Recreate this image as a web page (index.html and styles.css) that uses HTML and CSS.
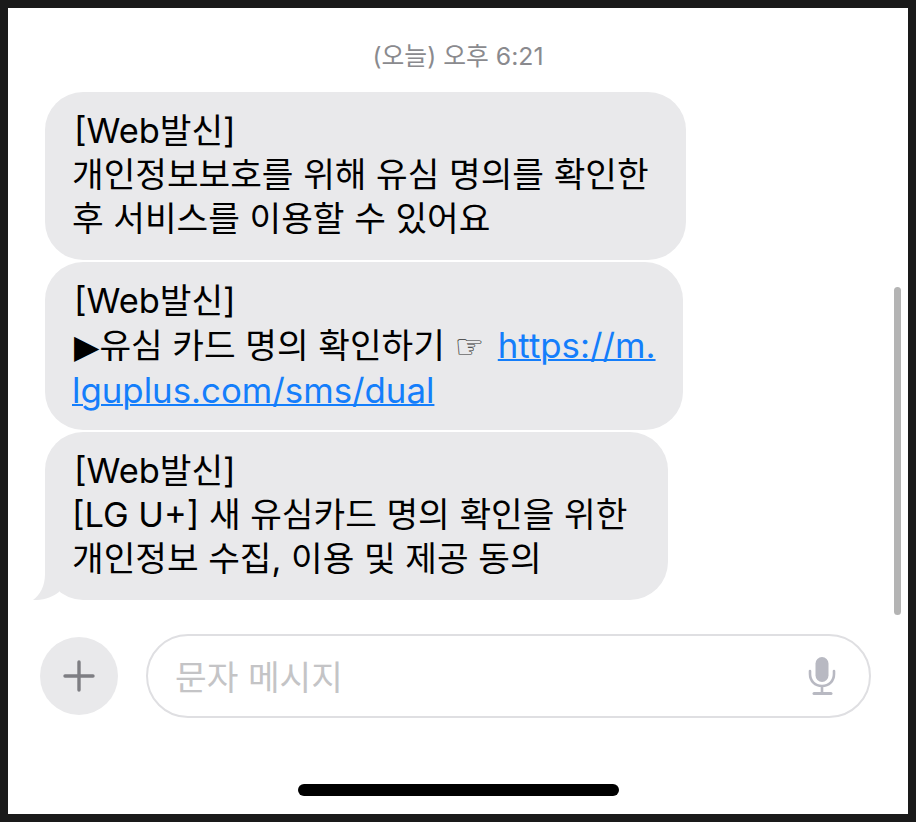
FILE: index.html
```html
<!DOCTYPE html>
<html lang="ko">
<head>
    <meta charset="UTF-8">
    <meta name="viewport" content="width=device-width, initial-scale=1.0">
    <title>문자 메시지</title>
    <link rel="stylesheet" href="styles.css">
</head>
<body>
    <div class="screen">
        <div class="timestamp">(오늘) 오후 6:21</div>

        <!-- Сообщения -->
        <div class="messages">
            <div class="bubble bubble-first">
                <span class="sender">[Web발신]</span><br>
                개인정보보호를 위해 유심 명의를 확인한<br>
                후 서비스를 이용할 수 있어요
            </div>
            <div class="bubble bubble-second">
                <span class="sender">[Web발신]</span><br>
                <span class="glyph arrow">▶</span>유심 카드 명의 확인하기 <span class="glyph hand">☞</span> <a href="#">https://m.<br>lguplus.com/sms/dual</a>
            </div>
            <div class="bubble bubble-third">
                <span class="sender">[Web발신]</span><br>
                [LG U+] 새 유심카드 명의 확인을 위한<br>
                개인정보 수집, 이용 및 제공 동의
                <svg class="tail" width="30" height="38" viewBox="0 0 30 38">
                    <path d="M12 0 V12 C12 24 7 33 0 38 C10 38.5 20 35 26 30 L26 10 Z" fill="#e9e9eb"/>
                </svg>
            </div>
        </div>

        <!-- Поле ввода -->
        <div class="composer">
            <button class="plus-button">
                <svg width="32" height="32" viewBox="0 0 32 32">
                    <path d="M16 2 V30 M2 16 H30" stroke="#7e7e83" stroke-width="3.4" stroke-linecap="round" fill="none"/>
                </svg>
            </button>
            <div class="input-pill">
                <span class="placeholder">문자 메시지</span>
                <svg class="mic" width="28" height="38" viewBox="0 0 28 38">
                    <rect x="7.5" y="0" width="13" height="25" rx="6.5" fill="#b8b9c2"/>
                    <path d="M2 14 V17 C2 24 7 29 14 29 C21 29 26 24 26 17 V14 M14 29 V36" stroke="#b8b9c2" stroke-width="2.6" stroke-linecap="round" fill="none"/>
                    <path d="M6 36.5 H23" stroke="#b8b9c2" stroke-width="3" stroke-linecap="round" fill="none"/>
                </svg>
            </div>
        </div>

        <div class="home-indicator"></div>
        <div class="scrollbar"></div>
    </div>
</body>
</html>
```

FILE: styles.css
```css
html, body {
    margin: 0;
    padding: 0;
}

body {
    width: 916px;
    height: 822px;
    box-sizing: border-box;
    border: 8px solid #1a1a1a;
    font-family: Inter, "Noto Sans CJK KR", sans-serif;
    background-color: #fff;
    overflow: hidden;
}

.screen {
    position: relative;
    height: 100%;
    display: flex;
    flex-direction: column;
}

.timestamp {
    margin-top: 33px;
    text-align: center;
    font-size: 24.8px;
    line-height: 30px;
    color: #8a8a8e;
}

/* Пузырьки */
.messages {
    margin-top: 21px;
    padding-left: 37px;
    display: flex;
    flex-direction: column;
    gap: 2px;
}

.bubble {
    position: relative;
    box-sizing: border-box;
    height: 168px;
    padding: 17px 0 0 27px;
    background-color: #e9e9eb;
    border-radius: 38px;
    font-size: 34.4px;
    line-height: 44px;
    color: #000;
    white-space: nowrap;
}

.bubble-first {
    width: 641px;
}

.bubble-second {
    width: 638px;
}

.bubble-third {
    width: 623px;
}

.sender {
    margin-left: 2px;
}

.bubble a {
    color: #147efb;
    font-size: 34.8px;
    text-decoration: underline;
    text-decoration-thickness: 2px;
}

.glyph {
    font-family: "DejaVu Sans", sans-serif;
    line-height: 0;
}

.arrow {
    font-size: 33px;
    margin-left: 2px;
}

.hand {
    font-size: 33px;
    color: #333;
    margin-right: 4px;
}

.tail {
    position: absolute;
    left: -12px;
    bottom: 0;
}

/* Поле ввода */
.composer {
    margin-top: 34px;
    padding-left: 32px;
    display: flex;
    align-items: center;
    gap: 28px;
}

.plus-button {
    width: 78px;
    height: 78px;
    padding: 0;
    border: none;
    border-radius: 50%;
    background-color: #e9e9eb;
    display: flex;
    justify-content: center;
    align-items: center;
}

.input-pill {
    box-sizing: border-box;
    width: 725px;
    height: 84px;
    padding: 0 33px 0 27px;
    border: 2px solid #dfdfe2;
    border-radius: 42px;
    display: flex;
    justify-content: space-between;
    align-items: center;
}

.placeholder {
    font-size: 34.4px;
    color: #c4c4c6;
    padding-bottom: 2px;
}

.home-indicator {
    width: 321px;
    height: 12px;
    margin: auto auto 18px;
    background-color: #000;
    border-radius: 6px;
}

/* Полоса прокрутки поверх экрана */
.scrollbar {
    position: absolute;
    top: 279px;
    right: 7px;
    width: 7px;
    height: 328px;
    background-color: #b4b4b4;
    border-radius: 4px;
}
```
